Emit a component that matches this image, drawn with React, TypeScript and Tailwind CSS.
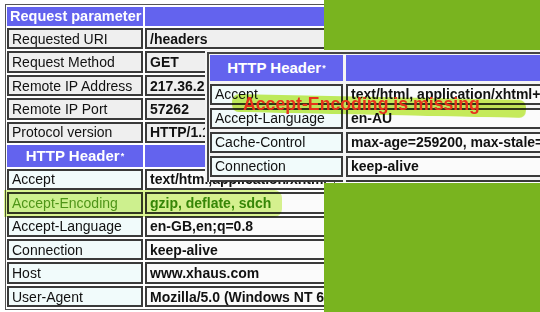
import React from 'react';

type Row = { name: string; value: string; tone?: 'param' | 'header' | 'hit' };

const paramRows: Row[] = [
  { name: 'Requested URI', value: '/headers' },
  { name: 'Request Method', value: 'GET' },
  { name: 'Remote IP Address', value: '217.36.217.52' },
  { name: 'Remote IP Port', value: '57262' },
  { name: 'Protocol version', value: 'HTTP/1.1' },
];

const headerRows: Row[] = [
  { name: 'Accept', value: 'text/html,application/xhtml+xml,application/xml;q=0.9,*/*;q=0.8' },
  { name: 'Accept-Encoding', value: 'gzip, deflate, sdch', tone: 'hit' },
  { name: 'Accept-Language', value: 'en-GB,en;q=0.8' },
  { name: 'Connection', value: 'keep-alive' },
  { name: 'Host', value: 'www.xhaus.com' },
  { name: 'User-Agent', value: 'Mozilla/5.0 (Windows NT 6.1; WOW64) AppleWebKit/537.36' },
];

const mobileRows: Row[] = [
  { name: 'Accept', value: 'text/html, application/xhtml+xml, application/xml' },
  { name: 'Accept-Language', value: 'en-AU' },
  { name: 'Cache-Control', value: 'max-age=259200, max-stale=604800' },
  { name: 'Connection', value: 'keep-alive' },
  { name: 'Host', value: 'www.xhaus.com' },
];

const cell = 'border-2 border-[#3a3a3a] flex items-center pl-[3px] pt-[1px] whitespace-nowrap overflow-hidden';

const HeaderTitle = () => (
  <span className="font-bold text-white text-[15px] whitespace-nowrap">
    HTTP Header<sup className="text-[9px] relative -top-[2px] ml-[1px]">*</sup>
  </span>
);

const RowCells = ({ row, h }: { row: Row; h: string }) => {
  const nameBg = row.tone === 'param' ? 'bg-[#efefef]' : 'bg-[#f1fbfb]';
  const valueBg = row.tone === 'param' ? 'bg-[#efefef]' : 'bg-[#fbfbfb]';
  const hit = row.tone === 'hit';
  return (
    <>
      <div className={`${cell} ${h} ${nameBg} ${hit ? 'text-[#5c9c2a]' : 'text-[#111]'}`}>{row.name}</div>
      <div className={`${cell} ${h} ${valueBg} font-bold ${hit ? 'text-[#3f8c0c]' : 'text-[#111]'}`}>{row.value}</div>
    </>
  );
};

export default function App() {
  return (
    <div className="relative w-[540px] h-[312px] overflow-hidden bg-white font-['Liberation_Sans',Arial,sans-serif] text-[14px]">
      {/* server-side table */}
      <div className="ml-[5px] mt-[4px] w-[330px] border border-[#555] pt-[2px] pl-[1px] pb-[2px]">
        <div className="grid grid-cols-[136px_181px] gap-x-[2px] gap-y-[2px]">
          <div className="h-[19px] bg-[#6363ee] flex items-center pl-[3px] font-bold text-white text-[14.5px] whitespace-nowrap">Request parameter</div>
          <div className="h-[19px] bg-[#6363ee]" />
          {paramRows.map(r => (
            <RowCells key={r.name} row={{ ...r, tone: 'param' }} h="h-[21.45px]" />
          ))}
          <div className="h-[21.45px] bg-[#6363ee] flex items-center justify-center"><HeaderTitle /></div>
          <div className="h-[21.45px] bg-[#6363ee]" />
          {headerRows.map(r => (
            <RowCells key={r.name} row={r} h="h-[21.45px]" />
          ))}
        </div>
      </div>

      {/* highlighter over the Accept-Encoding row */}
      <div className="absolute left-[4px] top-[190px] w-[278px] h-[27px] rounded-r-[8px] bg-[#cdf06a] opacity-75 mix-blend-multiply" />

      {/* mobile request, pasted on top */}
      <div className="absolute left-[205px] top-[50px] w-[335px] h-[132px] bg-[#f4f4f4] overflow-hidden">
        <div className="ml-[2px] mt-[2px] border-l-2 border-t-2 border-[#444] pl-[1px] pt-[1px]">
          <div className="grid grid-cols-[133px_200px] gap-x-[3px] gap-y-[2.5px]">
            <div className="h-[26px] bg-[#6363ee] flex items-center justify-center"><HeaderTitle /></div>
            <div className="h-[26px] bg-[#6363ee]" />
            {mobileRows.map(r => (
              <RowCells key={r.name} row={r} h="h-[21.5px]" />
            ))}
          </div>
        </div>
      </div>

      {/* green panels */}
      <div className="absolute left-[324px] top-0 w-[216px] h-[50px] bg-[#79b41f]" />
      <div className="absolute left-[324px] top-[183px] w-[216px] h-[129px] bg-[#79b41f]" />

      {/* annotation */}
      <div className="absolute left-[232px] top-[97px] w-[294px] h-[18px] rounded-[7px] bg-[#c2ec48] opacity-90 mix-blend-multiply rotate-[1.2deg]" />
      <div className="absolute left-[243px] top-[94px] text-[17.7px] font-bold text-[#e5321c] whitespace-nowrap leading-[20px]">
        Accept-Encoding is missing
      </div>
    </div>
  );
}
